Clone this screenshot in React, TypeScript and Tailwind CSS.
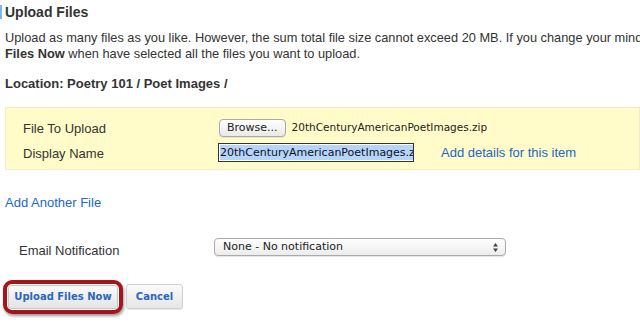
const ui = { fontFamily: '"Liberation Sans", Arial, sans-serif' };
const control = { fontFamily: '"DejaVu Sans", "Liberation Sans", sans-serif' };

export default function App() {
    return (
        <div className="relative w-[640px] h-[332px] overflow-hidden bg-white text-[#333] text-[13px]" style={ui}>
            <div className="absolute left-0 top-[5px] w-[2px] h-[14px] bg-[#7fb6e8]" />

            <h2 className="pl-[5px] pt-[3px] text-[14px] font-bold leading-[18px] text-[#333]">Upload Files</h2>

            <div className="pl-[5px] pt-[9px] leading-[16px] text-[12.8px] whitespace-nowrap">
                <p>Upload as many files as you like. However, the sum total file size cannot exceed 20 MB. If you change your mind,</p>
                <p><span className="font-bold">Files Now</span> when have selected all the files you want to upload.</p>
            </div>

            <p className="pl-[5px] pt-[14px] font-bold leading-[16px]">Location: Poetry 101 / Poet Images /</p>

            <div className="ml-[5px] mt-[15px] h-[63px] bg-[#fffcc9] border border-[#f0edc8] pl-[17px] pt-[9px]">
                <div className="flex items-center h-[21px]">
                    <span className="w-[196px] pt-[3px]">File To Upload</span>
                    <button className="h-[18px] px-[7px] rounded-[4px] border border-[#a9a9a9] bg-gradient-to-b from-white to-[#e9e9e9] text-[11px] text-[#222] leading-none shadow-[0_1px_0_rgba(0,0,0,0.08)]" style={control}>
                        Browse...
                    </button>
                    <span className="ml-[6px] text-[10.5px] text-[#222]" style={control}>20thCenturyAmericanPoetImages.zip</span>
                </div>
                <div className="flex items-center h-[21px] mt-[4px]">
                    <span className="w-[195px] pt-[2px]">Display Name</span>
                    <div className="w-[196px] h-[19px] border border-[#333] bg-white flex items-center px-[1px] overflow-hidden">
                        <span className="bg-[#b5d5ff] text-[11px] text-[#111] leading-[15px] whitespace-nowrap" style={control}>20thCenturyAmericanPoetImages.zip</span>
                    </div>
                    <a className="ml-[27px] text-[#2266cc]">Add details for this item</a>
                </div>
            </div>

            <a className="block pl-[5px] pt-[25px] leading-[16px] text-[#2266cc]">Add Another File</a>

            <div className="flex items-center pl-[19px] pt-[23px]">
                <span className="w-[195px] pt-[7px]">Email Notification</span>
                <div className="w-[292px] h-[18px] rounded-[4px] border border-[#aaa] bg-gradient-to-b from-white to-[#ececec] flex items-center justify-between pl-[8px] pr-[7px] shadow-[0_1px_1px_rgba(0,0,0,0.1)]">
                    <span className="text-[11px] text-[#222]" style={control}>None - No notification</span>
                    <svg width="5" height="9" viewBox="0 0 5 9" className="text-[#444]">
                        <path d="M2.5 0L5 3.5H0Z M2.5 9L0 5.5H5Z" fill="currentColor" />
                    </svg>
                </div>
            </div>

            <div className="flex items-center gap-[3px] pl-[3px] pt-[19px]">
                <div className="rounded-[9px] border-[4px] border-[#a3161c] p-[1px] shadow-[1px_2px_3px_rgba(0,0,0,0.4)]">
                    <button className="h-[24px] w-[110px] rounded-[3px] border border-[#c8c8c8] bg-gradient-to-b from-[#fafafa] to-[#e4e4e4] text-[10px] font-bold text-[#2a66bf]" style={control}>
                        Upload Files Now
                    </button>
                </div>
                <button className="h-[25px] w-[57px] rounded-[3px] border border-[#d0d0d0] bg-gradient-to-b from-[#fafafa] to-[#e6e6e6] text-[10px] font-bold text-[#2a66bf] shadow-[0_1px_1px_rgba(0,0,0,0.1)]" style={control}>
                    Cancel
                </button>
            </div>
        </div>
    );
}
